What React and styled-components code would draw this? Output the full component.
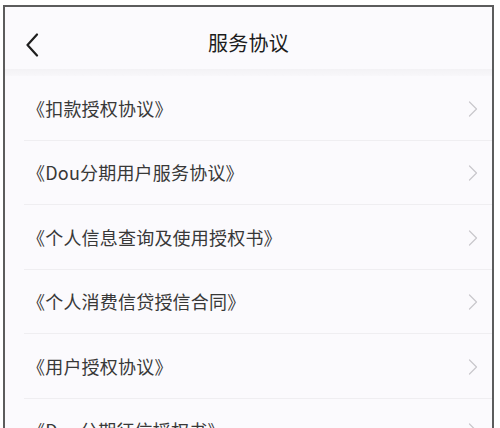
import React from "react";
import styled, { createGlobalStyle } from "styled-components";

const Global = createGlobalStyle`
  html, body {
    margin: 0;
    padding: 0;
    background: #ffffff;
    font-family: "Noto Sans CJK SC", "Noto Sans", sans-serif;
  }
`;

const Frame = styled.div`
  margin: 5px 0 0 3px;
  width: 487px;
  height: 440px;
  border: 2px solid #5c5c5c;
  border-bottom: none;
  background: #fbfafd;
  overflow: hidden;
`;

const Header = styled.div`
  height: 62px;
  display: flex;
  align-items: center;
  justify-content: center;
  position: relative;
  background: #fbfafd;
`;

const BackBtn = styled.div`
  position: absolute;
  left: 20px;
  top: 26px;
  width: 14px;
  height: 24px;
`;

const Title = styled.div`
  font-size: 20px;
  color: #1c1c1c;
  letter-spacing: 0.3px;
  margin-top: 8px;
`;

const Shade = styled.div`
  height: 7px;
  background: linear-gradient(#f3f2f5, #f8f7fa);
`;

const List = styled.div`
  display: flex;
  flex-direction: column;
`;

const Row = styled.div`
  height: 63.5px;
  margin-left: 19px;
  display: flex;
  align-items: center;
  justify-content: space-between;
  border-bottom: 1px solid #efeef1;
`;

const Label = styled.span`
  font-size: 18px;
  color: #383838;
  padding-left: 3px;
  letter-spacing: 0.2px;
`;

const Arrow = styled.svg`
  width: 10px;
  height: 16px;
  margin-right: 14px;
  margin-top: 2px;
`;

const items = [
  "《扣款授权协议》",
  "《Dou分期用户服务协议》",
  "《个人信息查询及使用授权书》",
  "《个人消费信贷授信合同》",
  "《用户授权协议》",
  "《Dou分期征信授权书》",
];

export default function App() {
  return (
    <>
      <Global />
      <Frame>
        <Header>
          <BackBtn>
            <svg width="14" height="24" viewBox="0 0 14 24">
              <path d="M12 1.5 L2.5 12 L12 22.5" fill="none" stroke="#1e1e1e" strokeWidth="2.2" strokeLinecap="round" strokeLinejoin="round" />
            </svg>
          </BackBtn>
          <Title>服务协议</Title>
        </Header>
        <Shade />
        <List>
          {items.map((t) => (
            <Row key={t}>
              <Label>{t}</Label>
              <Arrow viewBox="0 0 10 16">
                <path d="M1.5 1 L8.5 8 L1.5 15" fill="none" stroke="#c8c7cc" strokeWidth="1.2" strokeLinecap="round" strokeLinejoin="round" />
              </Arrow>
            </Row>
          ))}
        </List>
      </Frame>
    </>
  );
}
